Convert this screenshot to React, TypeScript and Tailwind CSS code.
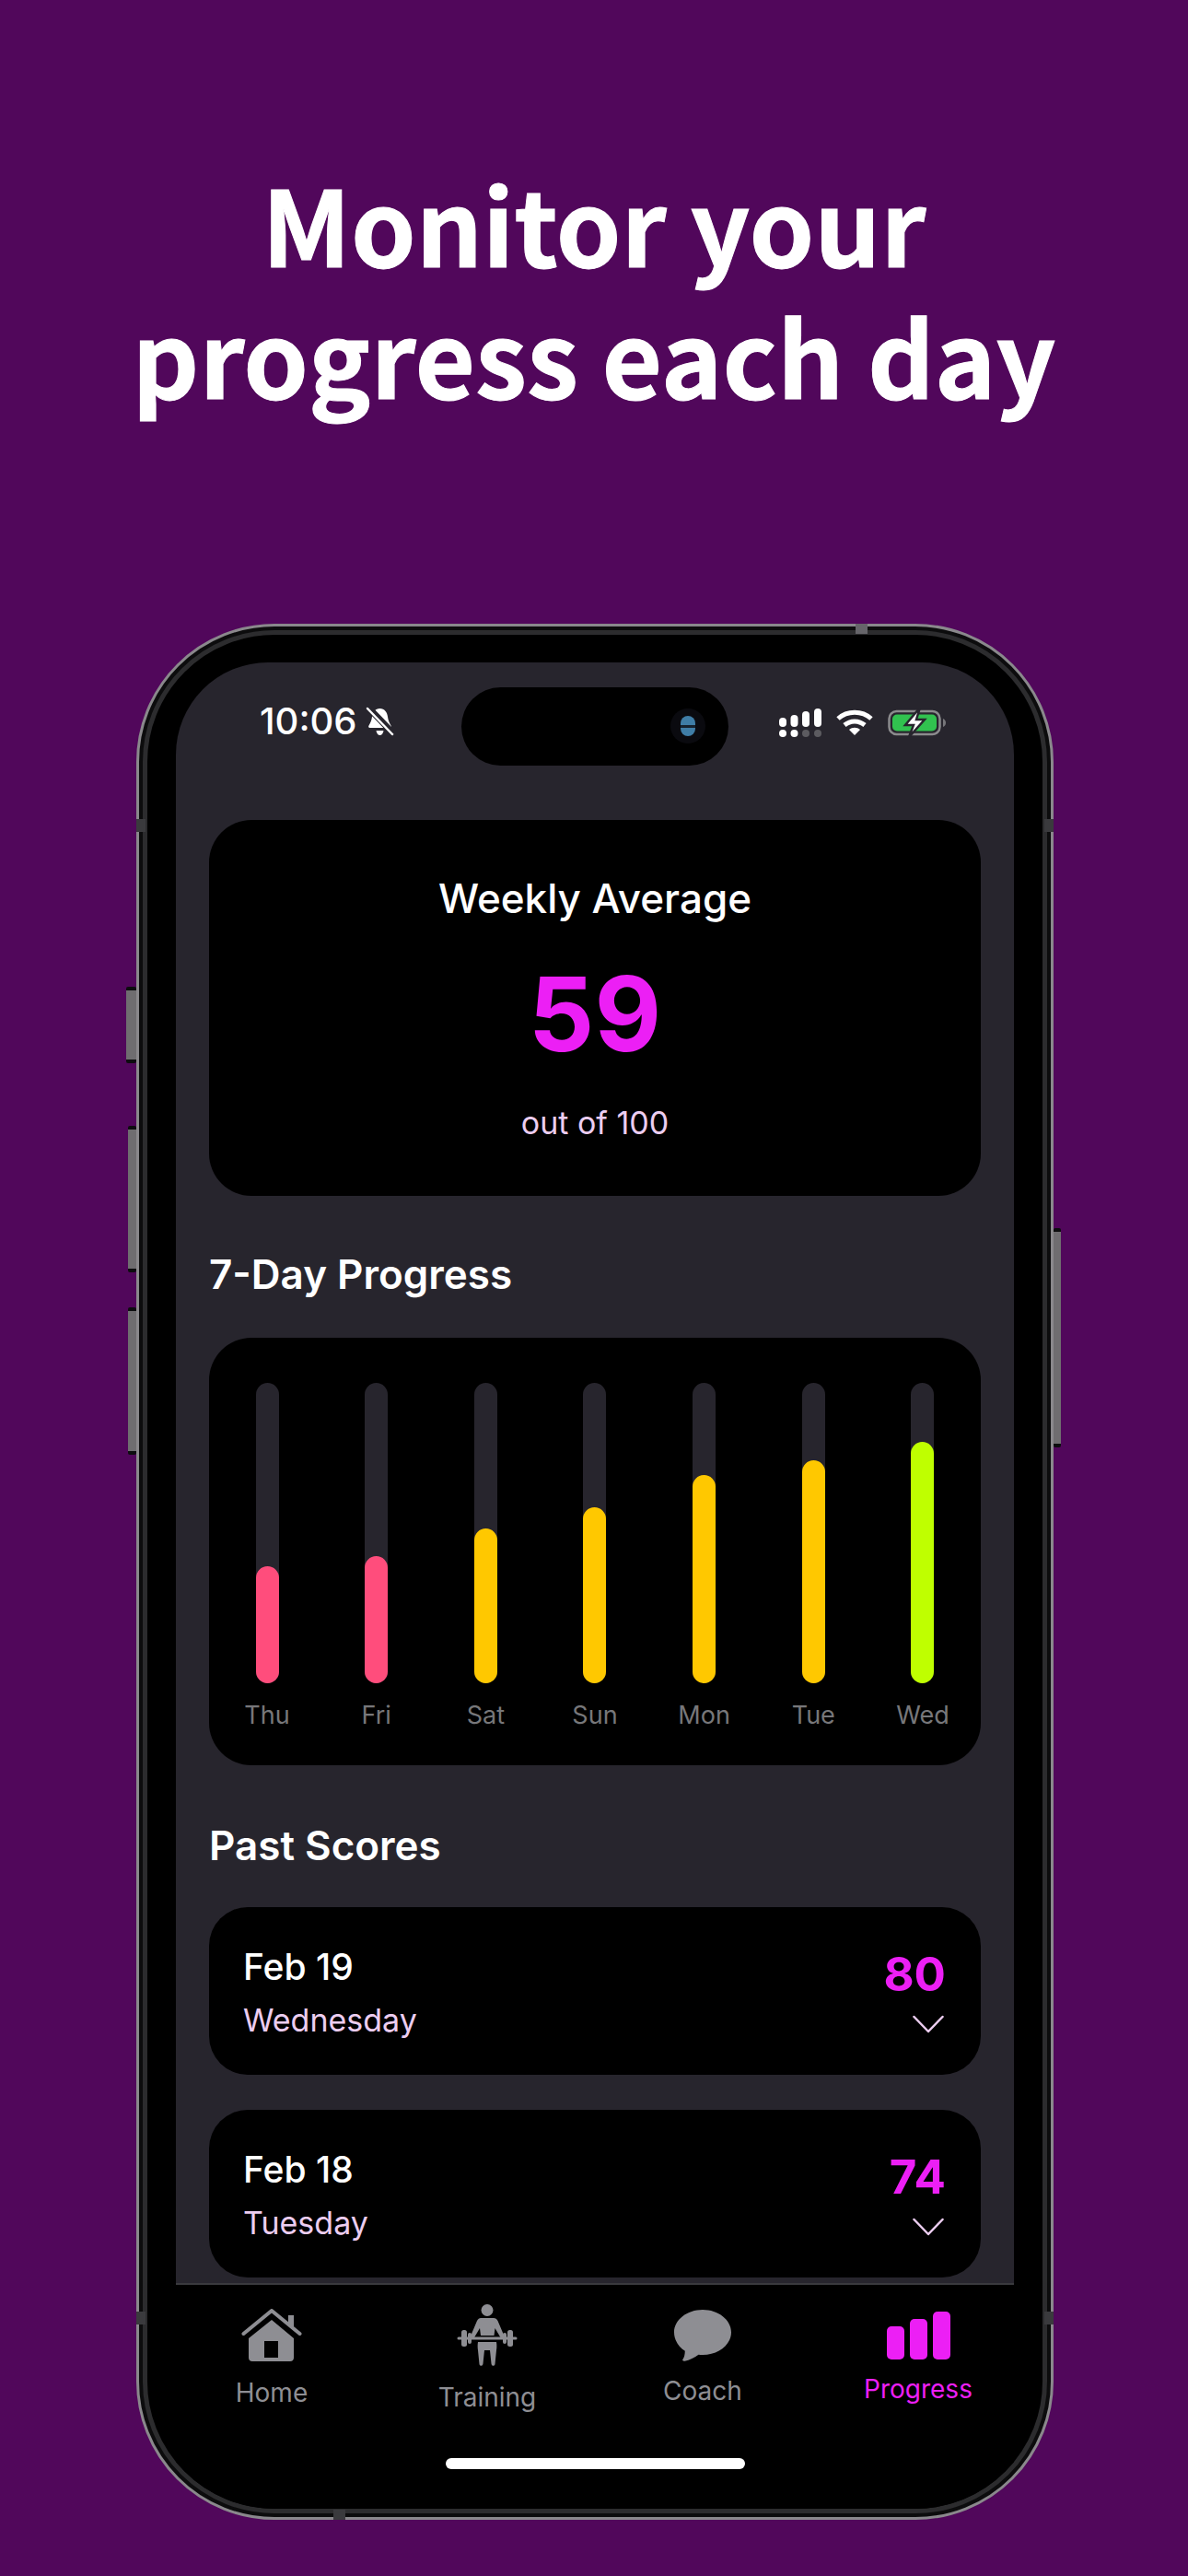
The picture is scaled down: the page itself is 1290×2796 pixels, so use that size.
const font = "[font-family:Inter,'Liberation_Sans',sans-serif]";

function SideButton({ className }: { className: string }) {
  return <div className={`absolute rounded-[2px] border-y-[4px] border-[#0d0d0f] bg-[#6f6d70] ${className}`} />;
}

function BellOff() {
  return (
    <svg width="31" height="34" viewBox="0 0 31 34" fill="none">
      <path d="M15.500 3c5 0 8 4 8.500 9 .4 4 2 7 3.500 9.500.8 1.300.2 2.500-1.200 2.500H4.700c-1.400 0-2-1.200-1.200-2.500C5 19 6.600 16 7 12c.5-5 3.500-9 8.500-9z" fill="#fff" />
      <path d="M11.500 27h8c-.5 3-2 5-4 5s-3.500-2-4-5z" fill="#fff" />
      <path d="M2 1l27 28" stroke="#27252d" strokeWidth="7" />
      <path d="M2 3l27 28" stroke="#fff" strokeWidth="2.500" strokeLinecap="round" />
    </svg>
  );
}

function Signal() {
  return (
    <svg width="46" height="31" viewBox="0 0 46 31" fill="#fff">
      <rect x="0" y="10" width="8" height="10" rx="4" />
      <rect x="12.500" y="7" width="8" height="13" rx="4" />
      <rect x="25" y="3" width="8" height="17" rx="4" />
      <rect x="38" y="0" width="8" height="20" rx="4" />
      <rect x="0" y="23" width="8" height="8" rx="4" />
      <rect x="12.500" y="23" width="8" height="8" rx="4" />
      <rect x="25" y="23" width="8" height="8" rx="4" fill="#5c5b60" />
      <rect x="38" y="23" width="8" height="8" rx="4" fill="#5c5b60" />
    </svg>
  );
}

function Wifi() {
  return (
    <svg width="40" height="28" viewBox="0 0 40 28" fill="none" stroke="#fff" strokeWidth="5">
      <path d="M2 10c10-9 26-9 36 0" />
      <path d="M9 17c6.500-5.500 15.500-5.500 22 0" />
      <path d="M20 28l-6-6c3.500-3 8.500-3 12 0z" fill="#fff" stroke="none" />
    </svg>
  );
}

function Battery() {
  return (
    <svg width="64" height="32" viewBox="0 0 64 32" fill="none">
      <rect x="1.500" y="4" width="55" height="25" rx="8" stroke="#8b8b8d" strokeWidth="2.500" />
      <rect x="5" y="7.500" width="48" height="18" rx="5" fill="#31c24f" />
      <path d="M60 12c2 1 3 2.500 3 4.500s-1 3.500-3 4.500z" fill="#77777a" />
      <path d="M35 0L19 19h9l-5 13 17-19h-9z" fill="#fff" stroke="#27252d" strokeWidth="2.500" />
    </svg>
  );
}

function HomeIcon() {
  return (
    <svg width="66" height="57" viewBox="0 0 66 57" fill="none">
      <path d="M2.500 27L33 2l30.500 25" stroke="#8e8e93" strokeWidth="4" strokeLinecap="round" strokeLinejoin="round" />
      <path d="M51 7h6v16l-6-5z" fill="#8e8e93" />
      <path fillRule="evenodd" clipRule="evenodd" d="M33 12l24 20v21c0 2.500-1.500 4-4 4H12c-2.500 0-4-1.500-4-4V32zM25 35v18h15V35z" fill="#8e8e93" />
    </svg>
  );
}

function TrainingIcon() {
  return (
    <svg width="66" height="67" viewBox="0 0 66 67" fill="#8e8e93">
      <circle cx="33" cy="6.500" r="6.500" />
      <path d="M26 15h14c2 0 3.500 1 4.500 3l8 19h-4.500l-6.500-11-1 8H26l-1-8-6.500 11H14l8-19c1-2 2.500-3 4-3z" />
      <path d="M2 37h62" stroke="#8e8e93" strokeWidth="3" strokeLinecap="round" />
      <rect x="5" y="28" width="6" height="18" rx="2.500" />
      <rect x="12" y="31" width="4" height="12" rx="2" />
      <rect x="50" y="31" width="4" height="12" rx="2" />
      <rect x="55" y="28" width="6" height="18" rx="2.500" />
      <path d="M23 41h20c.5 3 .5 6 0 9l-1.500 15c-.2 2.500-3.800 2.500-4-.5L36 50h-6l-1.500 14.500c-.2 3-3.800 3-4 .5L23 50c-.5-3-.5-6 0-9z" />
    </svg>
  );
}

function CoachIcon() {
  return (
    <svg width="62" height="56" viewBox="0 0 62 56" fill="#8e8e93">
      <path d="M31 0c17 0 31 11 31 24.500S48 49 31 49c-1.500 0-3 0-4.500-.3-4 3-10 6-15 7-2 .3-3-.8-2-2 1.500-2 2.200-5 2.300-9C5 40.500 0 33 0 24.500 0 11 14 0 31 0z" />
    </svg>
  );
}

function ProgressIcon() {
  return (
    <svg width="69" height="52" viewBox="0 0 69 52" fill="#ec1ff5">
      <rect x="0" y="16" width="19" height="36" rx="5" />
      <rect x="25" y="8" width="19" height="44" rx="5" />
      <rect x="50" y="0" width="19" height="52" rx="5" />
    </svg>
  );
}

const days = [
  { day: "Thu", h: 127, color: "bg-[#ff4d7c]" },
  { day: "Fri", h: 138, color: "bg-[#ff4d7c]" },
  { day: "Sat", h: 168, color: "bg-[#ffc800]" },
  { day: "Sun", h: 191, color: "bg-[#ffc800]" },
  { day: "Mon", h: 226, color: "bg-[#ffc800]" },
  { day: "Tue", h: 242, color: "bg-[#ffc800]" },
  { day: "Wed", h: 262, color: "bg-[#bfff00]" },
];

function ScoreCard({ date, day, score }: { date: string; day: string; score: number }) {
  return (
    <div className="flex h-[182px] items-start justify-between rounded-[42px] bg-black pl-[37px] pr-[38px]">
      <div className="pt-[43px]">
        <div className="text-[39px] font-medium leading-[44px] text-white">{date}</div>
        <div className="mt-[15px] text-[34px] leading-[42px] text-[#eccdf0]">{day}</div>
      </div>
      <div className="flex flex-col items-end pt-[45px]">
        <div className="text-[51px] font-bold leading-[56px] text-[#ec1ff5]">{score}</div>
        <svg className="mt-[16px] mr-[2px]" width="34" height="20" viewBox="0 0 34 20" fill="none" stroke="#eccdf0" strokeWidth="2.500" strokeLinecap="round" strokeLinejoin="round">
          <path d="M1.500 2L17 18 32.500 2" />
        </svg>
      </div>
    </div>
  );
}

function Tab({ label, icon, active, iconClass, labelClass }: { label: string; icon: React.ReactNode; active?: boolean; iconClass: string; labelClass: string }) {
  return (
    <div className="flex w-[234px] shrink-0 flex-col items-center">
      <div className={`flex items-end justify-center ${iconClass}`}>{icon}</div>
      <div className={`text-[28px] leading-[34px] ${active ? "text-[#ec1ff5]" : "text-[#8e8e93]"} ${labelClass}`}>{label}</div>
    </div>
  );
}

export default function App() {
  return (
    <div className={`flex h-[2796px] w-[1290px] flex-col items-center overflow-hidden bg-[#51075b] ${font}`}>
      <h1 className="mt-[170px] text-center text-[113px] font-bold leading-[143px] text-white [-webkit-text-stroke:1px_white] [font-family:'Noto_Sans_CJK_SC','Noto_Sans',sans-serif]">
        Monitor your
        <br />
        progress each day
      </h1>

      <div className="relative ml-[2px] mt-[221px] h-[2058px] w-[996px]">
        <SideButton className="left-[-11px] top-[394px] h-[83px] w-[11px]" />
        <SideButton className="left-[-9px] top-[545px] h-[159px] w-[9px]" />
        <SideButton className="left-[-9px] top-[742px] h-[160px] w-[9px]" />
        <SideButton className="right-[-8px] top-[656px] h-[238px] w-[8px]" />

        <div className="absolute left-[781px] top-0 h-[11px] w-[13px] bg-[#66656a]" />
        <div className="absolute bottom-0 left-[214px] h-[11px] w-[13px] bg-[#3a3a3d]" />
        <div className="absolute left-0 top-[1832px] h-[14px] w-[10px] bg-[#3a3a3d]" />
        <div className="absolute right-0 top-[1832px] h-[14px] w-[10px] bg-[#3a3a3d]" />
        <div className="absolute left-0 top-[212px] h-[14px] w-[10px] bg-[#3a3a3d]" />
        <div className="absolute right-0 top-[212px] h-[14px] w-[10px] bg-[#3a3a3d]" />

        <div className="h-full w-full rounded-[150px] border-[3px] border-[#8a888c] bg-[#0c0c0d] p-[4px]">
          <div className="flex h-full flex-col overflow-hidden rounded-[143px] border-[5px] border-[#2c2c2e] bg-black px-[31px] pt-[30px]">
            <div className="flex h-[1759px] shrink-0 flex-col overflow-hidden rounded-t-[100px] bg-[#27252d] px-[36px]">
              <div className="flex h-[171px] shrink-0 items-start pt-[27px]">
                <div className="flex w-[274px] shrink-0 items-center gap-[9px] pl-[55px] pt-[14px]">
                  <span className="text-[40px] font-medium leading-[46px] text-white">10:06</span>
                  <BellOff />
                </div>
                <div className="relative h-[85px] w-[290px] shrink-0 rounded-full bg-black">
                  <div className="absolute right-[25px] top-[23px] flex h-[38px] w-[38px] items-center justify-center rounded-full bg-[#0a0a0f]">
                    <div className="flex h-[22px] w-[16px] items-center rounded-full bg-[#3f7da6]">
                      <div className="h-[3px] w-full bg-[#16222e]" />
                    </div>
                  </div>
                </div>
                <div className="flex flex-1 items-center justify-end gap-[16px] pr-[37px] pt-[22px]">
                  <Signal />
                  <Wifi />
                  <Battery />
                </div>
              </div>

              <div className="flex h-[408px] shrink-0 flex-col items-center rounded-[46px] bg-black">
                <div className="mt-[59px] text-[44px] font-medium leading-[52px] text-white">Weekly Average</div>
                <div className="mt-[35px] text-[112px] font-bold leading-[128px] text-[#ec1ff5]">59</div>
                <div className="mt-[35px] text-[34px] leading-[40px] text-[#eccdf0]">out of 100</div>
              </div>

              <h2 className="mb-[44px] mt-[60px] text-[44px] font-semibold leading-[50px] text-white">7-Day Progress</h2>

              <div className="flex h-[464px] shrink-0 justify-between rounded-[46px] bg-black px-[25px] pt-[49px]">
                {days.map((d) => (
                  <div key={d.day} className="flex w-[76px] flex-col items-center">
                    <div className="flex h-[326px] w-[25px] flex-col justify-end rounded-full bg-[#27252d]">
                      <div className={`w-full rounded-full ${d.color}`} style={{ height: d.h }} />
                    </div>
                    <div className="mt-[18px] text-[27px] leading-[34px] text-[#77777a]">{d.day}</div>
                  </div>
                ))}
              </div>

              <h2 className="mb-[42px] mt-[62px] text-[44px] font-semibold leading-[50px] text-white">Past Scores</h2>

              <div className="flex flex-col gap-[38px]">
                <ScoreCard date="Feb 19" day="Wednesday" score={80} />
                <ScoreCard date="Feb 18" day="Tuesday" score={74} />
              </div>
            </div>

            <div className="flex flex-1 flex-col items-center border-t-[2px] border-[#3a3a3e] bg-black">
              <div className="mt-[13px] flex w-full justify-center">
                <Tab label="Home" icon={<HomeIcon />} iconClass="h-[70px]" labelClass="mt-[17px]" />
                <Tab label="Training" icon={<TrainingIcon />} iconClass="h-[75px]" labelClass="mt-[17px]" />
                <Tab label="Coach" icon={<CoachIcon />} iconClass="h-[70px]" labelClass="mt-[15px]" />
                <Tab label="Progress" icon={<ProgressIcon />} iconClass="h-[68px]" active labelClass="mt-[15px]" />
              </div>
              <div className="mt-[49px] h-[12px] w-[325px] rounded-full bg-white" />
            </div>
          </div>
        </div>
      </div>
    </div>
  );
}
